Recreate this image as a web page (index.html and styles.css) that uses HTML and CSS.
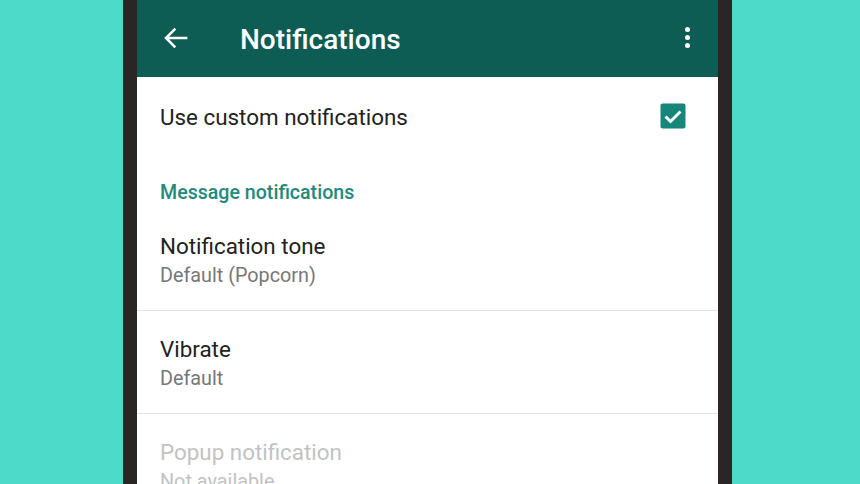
FILE: index.html
```html
<!DOCTYPE html>
<html lang="en">
<head>
    <meta charset="UTF-8">
    <meta name="viewport" content="width=device-width, initial-scale=1.0">
    <title>Notifications</title>
    <link rel="stylesheet" href="styles.css">
</head>
<body>

    <div class="phone">
        <div class="screen">

            <!-- Toolbar -->
            <header class="toolbar">
                <svg class="back" width="32" height="32" viewBox="0 0 24 24">
                    <path d="M20.5 12H4.5M11.5 5l-7 7 7 7" fill="none" stroke="#fff" stroke-width="1.9"/>
                </svg>
                <h1>Notifications</h1>
                <div class="more">
                    <span></span><span></span><span></span>
                </div>
            </header>

            <!-- Settings list -->
            <section class="row-switch">
                <span>Use custom notifications</span>
                <svg class="checkbox" width="26" height="26" viewBox="0 0 26 26">
                    <rect x="0.5" y="0.5" width="25" height="25" rx="2" fill="#16857a"/>
                    <path d="M5.5 13.5l5 5 10-10" fill="none" stroke="#fff" stroke-width="2.9"/>
                </svg>
            </section>

            <div class="subheader">Message notifications</div>

            <div class="item">
                <div class="title">Notification tone</div>
                <div class="summary">Default (Popcorn)</div>
            </div>

            <div class="item">
                <div class="title">Vibrate</div>
                <div class="summary">Default</div>
            </div>

            <div class="item disabled">
                <div class="title">Popup notification</div>
                <div class="summary">Not available</div>
            </div>

        </div>
    </div>

</body>
</html>
```

FILE: styles.css
```css
* {
    margin: 0;
    padding: 0;
    box-sizing: border-box;
}

body {
    font-family: 'Roboto', 'Liberation Sans', sans-serif;
    background-color: #4ddac8;
    height: 484px;
    overflow: hidden;
}

.phone {
    width: 609px;
    margin-left: 123px;
    height: 484px;
    background-color: #2a2625;
    padding: 0 14px 0 14px;
}

.screen {
    background-color: #fff;
    height: 100%;
    overflow: hidden;
}

.toolbar {
    height: 77px;
    background-color: #0d5d55;
    display: flex;
    align-items: center;
    padding: 0 0 0 23px;
    color: white;
}

.toolbar .back {
    margin-top: -1px;
}

.toolbar h1 {
    font-size: 28px;
    font-weight: 500;
    margin-left: 48px;
    margin-top: 2px;
    flex: 1;
}

.more {
    display: flex;
    flex-direction: column;
    gap: 3px;
    margin-right: 28px;
    margin-top: -2px;
}

.more span {
    width: 5px;
    height: 5px;
    border-radius: 50%;
    background-color: white;
}

.row-switch {
    height: 80px;
    display: flex;
    align-items: center;
    justify-content: space-between;
    padding: 0 32px 0 23px;
    font-size: 22.4px;
    color: #222;
}

.checkbox {
    margin-top: -2px;
}

.subheader {
    padding: 24px 23px 3px;
    line-height: 24px;
    font-size: 19.6px;
    font-weight: 500;
    color: #23897b;
}

.item {
    padding: 24px 23px 21px;
    border-bottom: 1px solid #e2e2e2;
}

.item .title {
    font-size: 22.4px;
    line-height: 28px;
    color: #222;
}

.item .summary {
    margin-top: 3px;
    font-size: 19.8px;
    line-height: 26px;
    color: #777;
}

.item.disabled .title,
.item.disabled .summary {
    color: #c2c2c2;
}
```
